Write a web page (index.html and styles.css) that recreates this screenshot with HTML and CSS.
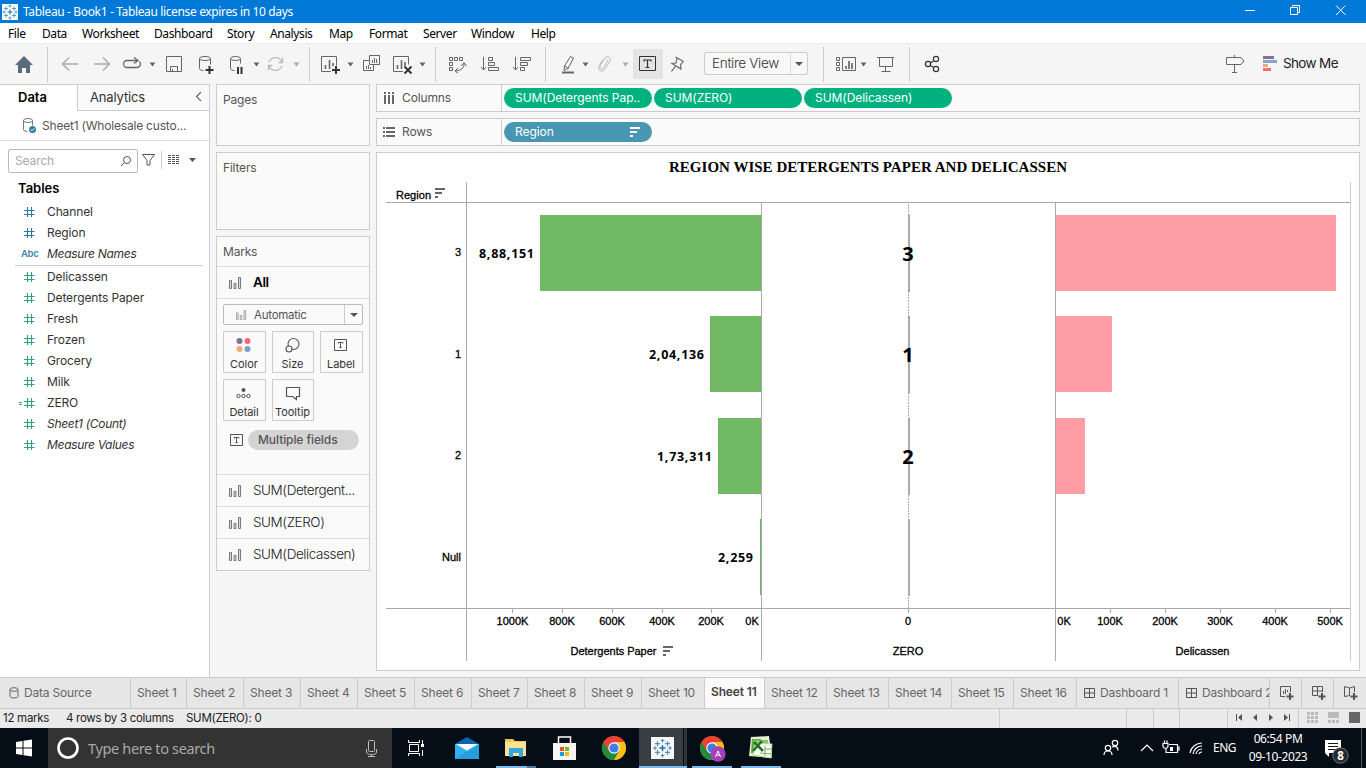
FILE: index.html
```html
<!DOCTYPE html>
<html lang="en">
<head>
<meta charset="utf-8">
<title>Tableau - Book1</title>
<link rel="stylesheet" href="styles.css">
</head>
<body>
<svg width="0" height="0" class="defs" aria-hidden="true">
  <defs>
    <symbol id="hash" viewBox="0 0 12 12"><path d="M4.500 1v10M8.500 1v10M1 4.500h10.500M1 8.500h10.500" stroke="currentColor" stroke-width="1.150" fill="none"/></symbol>
    <symbol id="bars" viewBox="0 0 13 12"><path d="M.5 3.500h2v8h-2zM5 6.500h2v5H5zM9.500 .5h2v11h-2z" fill="#ddd" stroke="#777"/></symbol>
    <symbol id="grid" viewBox="0 0 12 12"><path d="M1.500 1.500h10v9h-10zM6.500 1.500v9M1.500 6h10" fill="none" stroke="#555"/></symbol>
    <symbol id="tee" viewBox="0 0 13 12"><path d="M.5.5h12v11H.5z" fill="none" stroke="#555"/><path d="M4 4.500V3.500h5v1M6.500 3.500v5M5.300 8.500h2.400" fill="none" stroke="#555"/></symbol>
    <symbol id="logo" viewBox="0 0 16 16"><path d="M8 5.500v5M5.500 8h5" stroke="#1f6fa5" stroke-width="1.100"/><path d="M4 2.500v4M2 4.500h4M12 2.500v4M10 4.500h4M4 9.500v4M2 11.500h4M12 9.500v4M10 11.500h4M8 .5v3M6.500 2h3M8 12.500v3M6.500 14h3M.5 8h3M2 6.500v3M12.500 8h3M14 6.500v3" stroke="#4a8fb8" stroke-width=".9"/></symbol>
    <g id="chrome"><circle r="12" fill="#ea4335"/><path d="M-10.400-6A12 12 0 0 0 0 12L5.200 3-5.200 3z" fill="#1e8e3e"/><path d="M10.400-6A12 12 0 0 1 0 12L5.200 3 0-6z" fill="#fbc116"/><path d="M-10.400-6-5.200 3A6 6 0 0 1 0-6H10.400A12 12 0 0 0-10.400-6z" fill="#ea4335"/><circle r="5.700" fill="#fff"/><circle r="4.600" fill="#3b7de9"/></g>
  </defs>
</svg>

<header class="titlebar">
  <svg class="app-icon" width="16" height="16"><rect width="16" height="16" fill="#fff"/><use href="#logo" width="16" height="16"/></svg>
  <span class="app-title">Tableau - Book1 - Tableau license expires in 10 days</span>
  <svg class="win-controls" width="136" height="23" viewBox="1230 0 136 23" fill="none" stroke="#fff"><path d="M1245 10.500h10M1290.500 7.500h7v7h-7zM1292.500 7.500v-2h7v7h-2M1336 5.500l9.500 9.500M1345.500 5.500L1336 15"/></svg>
</header>

<nav class="menubar"><span>File</span><span>Data</span><span>Worksheet</span><span>Dashboard</span><span>Story</span><span>Analysis</span><span>Map</span><span>Format</span><span>Server</span><span>Window</span><span>Help</span></nav>

<div class="toolbar">
  <svg width="48" height="41" viewBox="0 43 48 41"><path d="M24 56l9 9h-3v8h-4v-5h-4v5h-4v-8h-3z" fill="#5d6c7a"/><path d="M47.500 47v35" stroke="#ccc"/></svg>
  <svg width="262" height="41" viewBox="48 43 262 41" fill="none" stroke="#666">
    <path d="M78 64H63M69 57.500L62.500 64l6.500 6.500M94 64h15M103 57.500l6.500 6.500-6.500 6.500" stroke="#aaa" stroke-width="1.400"/>
    <path d="M137 60.500h-10a3.500 3.500 0 0 0 0 7h10a3.500 3.500 0 0 0 2.500-6M134 57.500l4 3-4 3" stroke-width="1.300"/>
    <path d="M149.500 62.500h6l-3 4z" fill="#666" stroke="none"/>
    <path d="M166.500 56.500h15v15h-15zM170.500 71.500v-5h7v5M172.500 69v2.500"/>
    <ellipse cx="205" cy="58.500" rx="5.500" ry="2"/><path d="M199.500 58.500v10q0 2 4 2.200M210.500 58.500v6"/><path d="M209.500 66v8M205.500 70h8" stroke="#333" stroke-width="2"/>
    <ellipse cx="235.500" cy="58.500" rx="5" ry="2"/><path d="M230.500 58.500v10q0 2 4 2.200M240.500 58.500v5"/><path d="M238 67v7M241.500 67v7" stroke="#333" stroke-width="2"/>
    <path d="M253.500 62.500h6l-3 4z" fill="#666" stroke="none"/>
    <path d="M269 62a7 7 0 0 1 13 0M282 66a7 7 0 0 1-13 0M282.500 57.500v5h-4M268.500 70.500v-5h4" stroke="#bbb" stroke-width="1.300"/>
    <path d="M293.500 62.500h6l-3 4z" fill="#aaa" stroke="none"/><path d="M309.500 47v35" stroke="#ccc"/>
  </svg>
  <svg width="126" height="41" viewBox="310 43 126 41" fill="none" stroke="#666">
    <path d="M331 71.500h-9.500v-15h15v9"/><path d="M325.500 65v4M329.500 60v9M333 63v3" stroke-width="1.600"/><path d="M336 66v8M332 70h8" stroke="#333" stroke-width="2"/>
    <path d="M347.500 62.500h6l-3 4z" fill="#666" stroke="none"/>
    <path d="M369.500 55.500h10v9h-10zM369 60.500h-5.500v10h10v-5.500M372.500 60v3M374.500 58v5M376.500 59v4M366.500 66v3M368.500 65v4M370.500 67v2"/>
    <path d="M403 71.500h-9.500v-15h15v8"/><path d="M397.500 65v4M401.500 60v9M405 62v4" stroke-width="1.600"/><path d="M404.500 66.500l7 7M411.500 66.500l-7 7" stroke="#333" stroke-width="2"/>
    <path d="M419.500 62.500h6l-3 4z" fill="#666" stroke="none"/><path d="M435.500 47v35" stroke="#ccc"/>
  </svg>
  <svg width="110" height="41" viewBox="436 43 110 41" fill="none" stroke="#666">
    <path d="M449.500 57.500h3v3h-3zM454.500 57.500h3v3h-3zM459.500 57.500h3v3h-3zM449.500 62.500h3v3h-3zM449.500 67.500h3v3h-3zM464 63q1 7-8.500 8M461 66l3-3.500 2.500 3.500M458 68l-3 3 3 2"/>
    <path d="M483.500 57v12.500M481 67l2.500 3 2.500-3M488.500 57.500h4v3h-4zM488.500 62.500h6v3h-6zM488.500 67.500h10v3h-10zM515.500 57v12.500M513 67l2.500 3 2.500-3M520.500 57.500h10v3h-10zM520.500 62.500h7v3h-7zM520.500 67.500h4v3h-4z"/><path d="M545.500 47v35" stroke="#ccc"/>
  </svg>
  <svg width="87" height="41" viewBox="546 43 87 41" fill="none" stroke="#666">
    <path d="M570.500 56.500l3 1.500-5.500 10.500-4 2 .5-4.500zM564.500 66l4 2.500"/><path d="M562 72.500h12" stroke-width="2"/>
    <path d="M582.500 62.500h6l-3 4z" fill="#666" stroke="none"/>
    <path d="M608 60l-4.500 8q-1.500 2-3 1-1.500-1 0-4l4.500-7q1.500-2 4-1 2.500 1.500 1 4l-5 8q-2 3-4.500 2-3-1.500-1.500-5l4-6.500" stroke="#bbb"/>
    <path d="M622.500 62.500h6l-3 4z" fill="#aaa" stroke="none"/>
  </svg>
  <span class="label-toggle"><svg width="30" height="30" viewBox="633 49 30 30" fill="none" stroke="#333"><path d="M639.500 56.500h16v14h-16z"/><path d="M644 61.500V60h7v1.500M647.500 60v7.500M645.500 67.500h4" stroke-width="1.200"/></svg></span>
  <svg class="pin" width="41" height="41" viewBox="663 43 41 41" fill="none" stroke="#666"><path d="M675.500 57l8 4.500M677 58l-1 5-4 .500 9 5.500-.500-4 3-4M675.500 66l-4 5.500" stroke-width="1.200"/></svg>
  <span class="fit-select"><span>Entire View</span><i class="arrow"></i></span>
  <svg width="102" height="41" viewBox="808 43 102 41" fill="none" stroke="#666">
    <path d="M823.500 47v35M909.500 47v35" stroke="#ccc"/><path d="M836.500 57.500h3v3h-3zM836.500 62.500h3v3h-3zM836.500 67.500h3v3h-3zM842.500 57.500h13v13h-13z"/><path d="M846 66v3M849 61v8M852 63v6" stroke-width="1.700"/>
    <path d="M860.500 62.500h6l-3 4z" fill="#666" stroke="none"/><path d="M877 57.500h17M879.500 57.500v9h13v-9M885.500 67v4M881.500 71.500h9"/>
  </svg>
  <svg width="34" height="41" viewBox="910 43 34 41" fill="none" stroke="#333" stroke-width="1.200"><circle cx="928" cy="64" r="2.600"/><circle cx="936" cy="59" r="2.600"/><circle cx="936" cy="69" r="2.600"/><path d="M930.500 63l3-2M930.500 65.500l3 2"/></svg>
  <svg class="guide" width="66" height="41" viewBox="1217 43 66 41" fill="none" stroke="#666"><path d="M1226.500 57.500h14.500l3 3.500-3 3.500h-14.500zM1234.500 55v2M1234.500 65v7.500M1232 72.500h5"/><g stroke="none"><path d="M1263 56h11v3h-11z" fill="#856f97"/><path d="M1263 60h14v3h-14z" fill="#84a3cf"/><path d="M1263 64h5v3h-5z" fill="#f5a97b"/><path d="M1263 68h8v3h-8z" fill="#f86c80"/></g></svg>
  <span class="show-me">Show Me</span>
</div>

<main class="workspace">
  <aside class="data-pane">
    <div class="pane-tabs"><b>Data</b><span>Analytics</span><svg width="20" height="26" viewBox="189 85 20 26"><path d="M201 92.500L196.500 97l4.500 4.500" fill="none" stroke="#555" stroke-width="1.200"/></svg></div>
    <div class="source"><svg width="42" height="29" viewBox="0 111 42 29" fill="none" stroke="#777"><ellipse cx="28" cy="120.500" rx="4.500" ry="2"/><path d="M23.500 120.500v9q0 2 4 2M32.500 120.500v5"/><circle cx="32.500" cy="129.500" r="3.500" fill="#2f7fa3" stroke="none"/><path d="M30.800 129.500l1.200 1.300 2.300-2.500" stroke="#fff"/></svg><span>Sheet1 (Wholesale custo...</span></div>
    <div class="find"><div class="search"><span>Search</span><svg width="14" height="14" viewBox="119 153 14 14" fill="none" stroke="#555"><circle cx="127" cy="159" r="3.500"/><path d="M124.500 161.500l-3.500 3.500"/></svg></div>
      <svg width="71" height="24" viewBox="138 149 71 24" fill="none" stroke="#555"><path d="M142.500 154.500h12l-4.500 6v4.500h-3v-4.500z"/><path d="M161.500 151v18" stroke="#ccc"/><path d="M168 155.500h12M168 157.500h12M168 159.500h12M168 161.500h12M168 163.500h12" stroke-dasharray="3 1"/><path d="M189 158h7l-3.500 4z" fill="#555" stroke="none"/></svg></div>
    <h2>Tables</h2>
    <ul class="fields dimensions">
      <li><svg><use href="#hash"/></svg>Channel</li><li><svg><use href="#hash"/></svg>Region</li><li><b>Abc</b><em>Measure Names</em></li>
    </ul>
    <ul class="fields measures">
      <li><svg><use href="#hash"/></svg>Delicassen</li><li><svg><use href="#hash"/></svg>Detergents Paper</li><li><svg><use href="#hash"/></svg>Fresh</li><li><svg><use href="#hash"/></svg>Frozen</li><li><svg><use href="#hash"/></svg>Grocery</li><li><svg><use href="#hash"/></svg>Milk</li><li><svg class="calc" viewBox="0 0 16 12"><path d="M0 5.500h3M0 7.500h3" stroke="currentColor"/><use href="#hash" x="4" width="12" height="12"/></svg>ZERO</li><li><svg><use href="#hash"/></svg><em>Sheet1 (Count)</em></li><li><svg><use href="#hash"/></svg><em>Measure Values</em></li>
    </ul>
  </aside>

  <section class="cards">
    <div class="card pages">Pages</div>
    <div class="card filters">Filters</div>
    <div class="card marks">
      <div class="marks-title">Marks</div>
      <div class="mark-row all"><svg><use href="#bars"/></svg><b>All</b></div>
      <div class="mark-body">
        <div class="mark-type"><svg><use href="#bars"/></svg><span>Automatic</span><i class="arrow"></i></div>
        <div class="mark-buttons">
          <div><svg width="42" height="22" viewBox="0 0 42 22"><circle cx="16.500" cy="9" r="3" fill="#856f97"/><circle cx="24.500" cy="9" r="3" fill="#fb6678"/><circle cx="16.500" cy="17" r="3" fill="#f5a97b"/><circle cx="24.500" cy="17" r="3" fill="#7e9fca"/></svg>Color</div>
          <div><svg width="40" height="22" viewBox="0 0 40 22" fill="none" stroke="#555" stroke-width="1.100"><circle cx="21.500" cy="12" r="5.500"/><circle cx="17" cy="17" r="3" fill="#fafafa"/></svg>Size</div>
          <div><svg width="41" height="22" viewBox="0 0 41 22"><use href="#tee" x="14" y="7" width="13" height="12"/></svg>Label</div>
          <div><svg width="42" height="22" viewBox="0 0 42 22" fill="none" stroke="#555"><circle cx="20.500" cy="10" r="2" fill="#555" stroke="none"/><circle cx="15.500" cy="16" r="1.700"/><circle cx="20.500" cy="16" r="1.700"/><circle cx="25.500" cy="16" r="1.700"/></svg>Detail</div>
          <div><svg width="40" height="22" viewBox="0 0 40 22" fill="none" stroke="#555" stroke-width="1.200"><path d="M14.500 7.500h13v9h-3v3l-4-3h-6z"/></svg>Tooltip</div>
        </div>
        <div class="mark-field"><svg width="13" height="12"><use href="#tee"/></svg><span>Multiple fields</span></div>
      </div>
      <div class="mark-row"><svg><use href="#bars"/></svg><span>SUM(Detergent...</span></div>
      <div class="mark-row"><svg><use href="#bars"/></svg><span>SUM(ZERO)</span></div>
      <div class="mark-row"><svg><use href="#bars"/></svg><span>SUM(Delicassen)</span></div>
    </div>
  </section>

  <section class="content">
    <div class="shelf"><div class="shelf-name"><svg width="12" height="12" viewBox="0 0 12 12"><path d="M1 0h2v2H1zM5 0h2v2H5zM9 0h2v2H9zM1 3h2v9H1zM5 3h2v9H5zM9 3h2v9H9z" fill="#666"/></svg>Columns</div><span class="pill">SUM(Detergents Pap..</span><span class="pill">SUM(ZERO)</span><span class="pill">SUM(Delicassen)</span></div>
    <div class="shelf"><div class="shelf-name"><svg width="12" height="12" viewBox="0 0 12 12"><path d="M0 1h2v2H0zM0 5h2v2H0zM0 9h2v2H0zM3 1h9v2H3zM3 5h9v2H3zM3 9h9v2H3z" fill="#666"/></svg>Rows</div><span class="pill blue">Region<svg width="11" height="10"><path d="M0 0h10v2H0zM0 4h7v2H0zM0 8h3v2H0z" fill="#fff"/></svg></span></div>
    <div class="view">
      <svg width="982" height="517" viewBox="377 153 982 517">
        <text class="sheet-title" x="868" y="172" text-anchor="middle" textLength="398">REGION WISE DETERGENTS PAPER AND DELICASSEN</text>
        <g shape-rendering="crispEdges">
          <g fill="#72b966"><path d="M540 215h221v76H540zM710 316h51v76h-51zM718 418h43v76h-43zM760 519h1v76h-1z"/></g>
          <path fill="#ff9da7" d="M1056 215h280v76h-280zM1056 316h56v76h-56zM1056 418h29v76h-29z"/>
          <path stroke="#aaa" stroke-dasharray="2 1" d="M908.500 204v404"/>
          <path fill="#aaa" d="M908 215h2v77h-2zM908 316h2v77h-2zM908 418h2v77h-2zM908 519h2v77h-2z"/>
          <path stroke="#aaa" fill="none" d="M386 202.500h965M386 608.500h965M466.500 182v479M761.500 203v458M1055.500 203v458M512.500 609v4M562.500 609v4M612.500 609v4M662.500 609v4M711.500 609v4M908.500 609v4M1110.500 609v4M1165.500 609v4M1220.500 609v4M1275.500 609v4M1330.500 609v4"/><path stroke="#ccc" d="M1350.500 182v479"/>
        </g>
        <g class="axis">
          <text x="396" y="199" textLength="35">Region</text>
          <g text-anchor="end"><text x="461" y="256">3</text><text x="461" y="358">1</text><text x="461" y="459">2</text><text x="461" y="561">Null</text></g>
          <g text-anchor="middle"><text x="512.500" y="625">1000K</text><text x="562" y="625">800K</text><text x="612" y="625">600K</text><text x="662" y="625">400K</text><text x="711" y="625">200K</text><text x="752" y="625">0K</text><text x="908" y="625">0</text><text x="1064" y="625">0K</text><text x="1110" y="625">100K</text><text x="1165" y="625">200K</text><text x="1220" y="625">300K</text><text x="1275" y="625">400K</text><text x="1330" y="625">500K</text><text x="613.500" y="655" textLength="86">Detergents Paper</text><text x="908" y="655">ZERO</text><text x="1202.500" y="655">Delicassen</text></g>
        </g>
        <path d="M435 188h10v2h-10zM435 192h7v2h-7zM435 196h3v2h-3zM663 646h10v2h-10zM663 650h7v2h-7zM663 654h3v2h-3z" fill="#666"/>
        <g class="values"><text x="479" y="258" textLength="55">8,88,151</text><text x="649" y="359" textLength="55">2,04,136</text><text x="657" y="461" textLength="55">1,73,311</text><text x="718" y="562" textLength="35">2,259</text></g>
        <g class="big"><text x="908" y="261">3</text><text x="908" y="362">1</text><text x="908" y="464">2</text></g>
      </svg>
    </div>
  </section>
</main>

<nav class="tabs">
  <span class="datasource"><svg width="10" height="12" fill="none" stroke="#666"><ellipse cx="5" cy="2.500" rx="4" ry="1.800"/><path d="M1 2.500v7q0 1.500 4 1.500t4-1.500v-7"/></svg>Data Source</span><span>Sheet 1</span><span>Sheet 2</span><span>Sheet 3</span><span>Sheet 4</span><span>Sheet 5</span><span>Sheet 6</span><span>Sheet 7</span><span>Sheet 8</span><span>Sheet 9</span><span>Sheet 10</span><span class="active">Sheet 11</span><span>Sheet 12</span><span>Sheet 13</span><span>Sheet 14</span><span>Sheet 15</span><span>Sheet 16</span><span class="dash"><svg width="12" height="12"><use href="#grid"/></svg>Dashboard 1</span><span class="dash"><svg width="12" height="12"><use href="#grid"/></svg>Dashboard 2</span>
  <span class="new"><svg width="16" height="16" fill="none" stroke="#555"><path d="M6 11.500H1.500v-10h10V7M4.500 6v3M6.500 4v5M8.500 5v2"/><path d="M11 8v7M7.500 11.500h7" stroke-width="2"/></svg></span><span class="new"><svg width="16" height="16" fill="none" stroke="#555"><path d="M7 10.500H1.500v-9h10V7M6.500 1.500v9M1.500 6h10"/><path d="M11 8v7M7.500 11.500h7" stroke-width="2"/></svg></span><span class="new"><svg width="16" height="16" fill="none" stroke="#555"><path d="M7 10.500L1.500 11.500v-10l5 1.500 5-1.500V7M6.500 3v7"/><path d="M11 8v7M7.500 11.500h7" stroke-width="2"/></svg></span>
</nav>
<footer class="status"><span>12 marks</span><span>4 rows by 3 columns</span><span>SUM(ZERO): 0</span><i></i><i></i><i></i><i></i>
  <svg width="186" height="19" viewBox="1180 709 186 19"><path d="M1227.500 708v20M1298.500 708v20" stroke="#ccc"/><path d="M1236 714h1v7h-1zM1242 714v7l-4-3.500zM1257 714v7l-4-3.500zM1269 714v7l4-3.500zM1284 714v7l4-3.500zM1289 714h1v7h-1z" fill="#555"/><path d="M1307 712h3v3h-3zM1311 712h3v3h-3zM1315 712h3v3h-3zM1307 716h3v3h-3zM1311 716h3v3h-3zM1315 716h3v3h-3zM1307 720h3v3h-3zM1311 720h3v3h-3zM1315 720h3v3h-3zM1328 712h11v6h-11zM1328 720h3v3h-3zM1332 720h3v3h-3zM1336 720h3v3h-3z" fill="#bbb"/><path d="M1349 712h11v11h-11z" fill="#666"/></svg>
</footer>

<footer class="taskbar">
  <svg width="48" height="40" viewBox="0 728 48 40"><path d="M16 742l6.500-1v6.500H16zM23.500 740.800l8.500-1.300v8H23.500zM16 748.500h6.500v6.500l-6.500-1zM23.500 748.500H32v8l-8.500-1.300z" fill="#fff"/></svg>
  <div class="cortana"><svg width="40" height="40" viewBox="48 728 40 40"><circle cx="68" cy="748" r="9.500" fill="none" stroke="#fff" stroke-width="2.600"/></svg><span>Type here to search</span><svg width="27" height="40" viewBox="365 728 27 40" fill="none" stroke="#bbb"><rect x="368.500" y="740.500" width="6" height="11" rx="1"/><path d="M366.500 749v3q0 2.500 5 2.500t5-2.500v-3M371.500 754.500v2M368 756.500h7"/></svg></div>
  <svg width="408" height="40" viewBox="392 728 408 40">
    <path d="M409.500 744.500h9v7h-9zM408.500 740v2.500h11V740M408.500 756v-2.500h11v2.500M422.500 740v5M422.500 750v6" fill="none" stroke="#fff"/><path d="M421 744h3v3h-3z" fill="#fff"/>
    <path d="M455 744l12-7 12 7v4h-24z" fill="#0c63b4"/><path d="M455 744h24v15h-24z" fill="#31b1ed"/><path d="M455 744l24 15v-15l-12 7z" fill="#66c8f4"/><path d="M479 744l-24 15h24z" fill="#249fdd"/><path d="M456 744h22l-11 6.500z" fill="#fff"/>
    <path d="M505 739h8l2 2h11v15h-21z" fill="#f6c64e"/><path d="M505 742h21v14h-21z" fill="#ffe294"/><path d="M509 748h14v9h-4v-4h-6v4h-4z" fill="#35a7df"/>
    <path d="M553 743h23v17h-23z" fill="#f5f5f5"/><path d="M558.500 743v-6h12v6" fill="none" stroke="#fff" stroke-width="1.500"/><path d="M560 747h4v4h-4z" fill="#f25022"/><path d="M565 747h4v4h-4z" fill="#7fba00"/><path d="M560 752h4v4h-4z" fill="#00a4ef"/><path d="M565 752h4v4h-4z" fill="#ffb900"/>
    <use href="#chrome" x="614" y="748"/>
    <path d="M639 728h44v40h-44z" fill="#393d44"/><path d="M684 728h3v40h-3z" fill="#30343b"/><path d="M651 737h23v22h-23z" fill="#f8f8f8"/><use href="#logo" x="652" y="738" width="21" height="20"/>
    <use href="#chrome" x="712" y="748"/><circle cx="718" cy="754" r="7.700" fill="#a142b8"/><path d="M715.500 757l2.500-6 2.500 6M716.500 755h3" fill="none" stroke="#fff"/>
    <path d="M751 737l18-1 1 8 2 14-23-2z" fill="#e2f0d5"/><path d="M752 739h9l-3 15-7-1z" fill="#5ea941"/><path d="M753 740h15v4h-14z" fill="#8cc26c"/><path d="M755 743l17 1-1 14-18-3z" fill="#f7fbf3" stroke="#b7d6a4"/><path d="M754 742l9 9M762 741l-9 10" stroke="#257026" stroke-width="2.500"/><path d="M765 746v10M760 753l11 1M764 749h8" stroke="#76ae5b"/>
    <path d="M496 766h31v2h-31zM639 766h48v2h-48zM692 766h40v2h-40zM741 766h40v2h-40z" fill="#76b9ed"/><path d="M527 766h9v2h-9z" fill="#4b7698"/>
  </svg>
  <svg class="tray" width="113" height="40" viewBox="1100 728 113 40" fill="none" stroke="#fff" stroke-width="1.200"><circle cx="1115" cy="743" r="2.700"/><circle cx="1108" cy="748" r="2.700"/><path d="M1104 755q0-4 4-4t4 4M1112 747q6-2 6 3.500M1141 751l6-6 6 6M1169 744.500h8.500v8h-9.500M1178 747h1v3h-1M1163 743.500h5v3q-1 2-2.500 2t-2.500-2zM1164.500 743v-2.500M1167 743v-2.500M1166 749v3.500h2"/><path d="M1170 747h3v4h-3z" fill="#fff" stroke="none"/><path d="M1190 753a12 12 0 0 1 12-10M1193 754a9 9 0 0 1 9-8M1196 754a6 6 0 0 1 6-5M1199 754a3 3 0 0 1 3-2"/></svg>
  <span class="lang">ENG</span><div class="clock"><span>06:54 PM</span><span>09-10-2023</span></div>
  <svg width="49" height="40" viewBox="1317 728 49 40"><path d="M1325 740h16v13h-12v4l-4-4z" fill="#fff"/><path d="M1328 743.500h10M1328 746.500h10M1328 749.500h7" stroke="#15191f"/><circle cx="1340.500" cy="755.500" r="7.700" fill="#272b30" stroke="#71767b"/><text x="1340.500" y="759.500" class="badge">8</text><path d="M1361.500 728v40" stroke="#555"/></svg>
</footer>
</body>
</html>
```
FILE: styles.css
```css
* { box-sizing: border-box; }
body { margin: 0; width: 1366px; height: 768px; overflow: hidden; background: #f5f5f5; font: 12px/16px Inter, "Open Sans", sans-serif; letter-spacing: -.12px; color: #333; display: flex; flex-direction: column; }
svg { display: block; flex: none; }
svg text { letter-spacing: 0; }
.defs { position: absolute; }
.titlebar, .menubar, .taskbar { font-family: "Noto Sans", "Open Sans", sans-serif; }
.titlebar { height: 23px; flex: none; background: #0078d7; color: #fff; display: flex; align-items: center; padding-left: 2px; }
.app-title { margin-left: 5px; white-space: nowrap; letter-spacing: -.36px; }
.win-controls { margin-left: auto; }
.menubar { height: 20px; flex: none; background: #fff; color: #000; display: grid; grid-template-columns: 34px 40px 72px 73px 43px 59px 40px 54px 48px 60px 40px; padding-left: 8px; line-height: 22px; letter-spacing: -.4px; }
.toolbar { height: 41px; flex: none; display: flex; align-items: center; border-top: 1px solid #eee; }
.toolbar > svg { margin-top: -1px; }
.label-toggle { background: #e4e4e4; width: 30px; height: 30px; }
.fit-select { width: 104px; height: 23px; border: 1px solid #ccc; border-radius: 2px; display: flex; background: #f8f8f8; font-size: 13.500px; line-height: 21px; color: #333; font-weight: 300; white-space: nowrap; margin-top: -1px; }
.fit-select span { width: 86px; padding-left: 7px; border-right: 1px solid #ddd; letter-spacing: -.3px; }
.arrow { border: 4px solid transparent; border-top: 4px solid #555; border-bottom: 0; margin: auto; }
.guide { margin-left: auto; }
.show-me { width: 83px; font-size: 13.500px; line-height: 16px; color: #222; letter-spacing: -.75px; margin-top: -2px; letter-spacing: -.65px; }
.workspace { height: 593px; flex: none; display: flex; }
.data-pane { width: 210px; border: 1px solid #ccc; border-left: 0; border-bottom: 0; background: #fff; }
.pane-tabs { height: 26px; display: flex; line-height: 25px; font-size: 13px; letter-spacing: -.15px; }
.pane-tabs b { width: 77px; padding-left: 18px; color: #000; font-weight: 600; letter-spacing: 0; }
.pane-tabs span { flex: 1; padding-left: 12px; border: 1px solid #ccc; border-width: 0 0 1px 1px; background: #fafafa; }
.pane-tabs svg { background: #fafafa; border-bottom: 1px solid #ccc; }
.source { height: 30px; display: flex; border-bottom: 1px solid #ddd; line-height: 29px; color: #555; white-space: nowrap; letter-spacing: -.2px; }
.find { display: flex; padding: 8px 0 0 8px; height: 37px; }
.search { width: 130px; height: 24px; border: 1px solid #bbb; border-radius: 2px; display: flex; justify-content: space-between; align-items: center; padding: 0 4px 0 6px; color: #aaa; }
h2 { margin: 0; padding-left: 18px; height: 23px; font-size: 13px; line-height: 21px; font-weight: 600; color: #000; letter-spacing: 0; }
.fields { list-style: none; margin: 0; padding: 0; color: #333; }
.fields li { height: 21px; line-height: 21px; display: flex; align-items: center; padding-left: 23px; white-space: nowrap; }
.fields em { letter-spacing: -.3px; }
.fields svg { width: 12px; height: 12px; margin-right: 12px; color: #2e7aa1; }
.fields b { width: 26px; margin-left: -2px; font-size: 9.500px; font-weight: 600; color: #3f86a7; letter-spacing: -.3px; }
.measures { border-top: 1px solid #ccc; margin: 1px 6px 0 15px; }
.measures li { padding-left: 8px; }
.measures svg { color: #35a178; }
.fields .calc { width: 16px; margin-left: -4px; }
.cards { width: 154px; margin-left: 6px; display: flex; flex-direction: column; gap: 6px; }
.card { border: 1px solid #ccc; background: #fafafa; color: #555; letter-spacing: -.2px; }
.pages { height: 62px; padding: 7px 6px; }
.filters { height: 78px; padding: 7px 6px; }
.marks { height: 335px; }
.marks-title { height: 29px; padding: 7px 6px; }
.mark-row { height: 32px; border-top: 1px solid #ddd; display: flex; align-items: center; padding-left: 12px; font-size: 13.500px; color: #222; white-space: nowrap; font-weight: 300; letter-spacing: -.42px; }
.mark-row svg { width: 13px; height: 12px; margin-right: 11px; }
.mark-row span, .mark-row b { margin-top: -2px; }
.mark-row b { color: #000; font-weight: 600; }
.mark-body { height: 176px; border-top: 1px solid #ddd; padding: 5px 6px; }
.mark-type { width: 140px; height: 21px; border: 1px solid #bbb; border-radius: 2px; display: flex; align-items: center; font-size: 11.500px; }
.mark-type svg { width: 11px; height: 10px; margin: 0 7px 0 12px; opacity: .7; }
.mark-type span { width: 91px; border-right: 1px solid #ccc; line-height: 20px; height: 19px; letter-spacing: -.25px; }
.mark-buttons { display: grid; grid-template-columns: 43px 42px 43px; gap: 6px; margin-top: 6px; }
.mark-buttons div { height: 42px; border: 1px solid #ccc; font-size: 11px; color: #333; text-align: center; line-height: 20px; white-space: nowrap; padding-right: 1px; letter-spacing: -.05px; }
.mark-buttons svg { margin-left: -1px; }
.mark-field { display: flex; align-items: center; margin: 9px 0 0 7px; gap: 5px; }
.mark-field span { width: 111px; height: 20px; line-height: 20px; border-radius: 10px; background: #d4d4d4; padding-left: 10px; font-weight: 500; letter-spacing: -.08px; }
.content { margin-left: 6px; width: 984px; display: flex; flex-direction: column; gap: 6px; }
.shelf { height: 28px; border: 1px solid #ccc; background: #fafafa; display: flex; align-items: center; gap: 2px; }
.shelf-name { width: 125px; height: 26px; border-right: 1px solid #ccc; display: flex; align-items: center; padding-left: 6px; gap: 7px; color: #555; }
.pill { width: 148px; height: 20px; border-radius: 10px; background: #00b180; color: #fff; line-height: 20px; padding: 0 11px; display: flex; align-items: center; justify-content: space-between; white-space: nowrap; letter-spacing: -.05px; }
.blue { background: #4996b2; }
.view { height: 519px; border: 1px solid #ccc; background: #fff; }
.sheet-title { font: bold 15px "Liberation Serif", serif; fill: #000; }
.axis { font: 11px "Liberation Sans", sans-serif; fill: #000; stroke: #000; stroke-width: .3px; }
.values { font: bold 12.500px "Noto Sans", sans-serif; fill: #000; }
.big { font: bold 20px "Noto Sans", sans-serif; text-anchor: middle; fill: #000; }
.tabs { height: 32px; flex: none; display: grid; grid-template-columns: 131px 56px 57px 57px 57px 57px 57px 56px 57px 57px 63px 60px 62px 62px 63px 62px 63px 102px 91px 32px 32px 33px; background: #e6e6e6; border: 1px solid #ccc; border-width: 1px 0; color: #666; line-height: 30px; letter-spacing: -.2px; }
.tabs span { border-right: 1px solid #ccc; padding-left: 6px; white-space: nowrap; overflow: hidden; }
.tabs .active { background: #fafafa; color: #444; font-weight: 600; letter-spacing: -.15px; line-height: 28px; }
.tabs .datasource, .tabs .dash { display: flex; align-items: center; gap: 5px; }
.tabs .datasource { padding-left: 9px; }
.tabs .new { padding: 7px 0 0 9px; }
.status { height: 19px; flex: none; background: #eaeaea; display: grid; grid-template-columns: 63px 120px 100px 714px 127px 27px 26px 186px; color: #222; font-size: 11.500px; line-height: 18px; padding-left: 3px; white-space: nowrap; letter-spacing: -.28px; }
.status i { border-right: 1px solid #ccc; }
.taskbar { height: 40px; flex: none; background: #050d16; color: #fff; display: flex; }
.cortana { width: 344px; background: #333; display: flex; color: #aaa; font-size: 14.500px; line-height: 40px; letter-spacing: -.35px; }
.cortana svg:last-child { margin-left: auto; }
.tray { margin-left: auto; }
.lang { width: 31px; line-height: 39px; font-size: 12px; letter-spacing: -.5px; }
.clock { width: 73px; text-align: center; display: flex; flex-direction: column; line-height: 18px; padding: 2px 5px 0 0; letter-spacing: -.4px; white-space: nowrap; align-items: center; }
.badge { font: bold 11.500px "Noto Sans", sans-serif; fill: #fff; text-anchor: middle; }
```
